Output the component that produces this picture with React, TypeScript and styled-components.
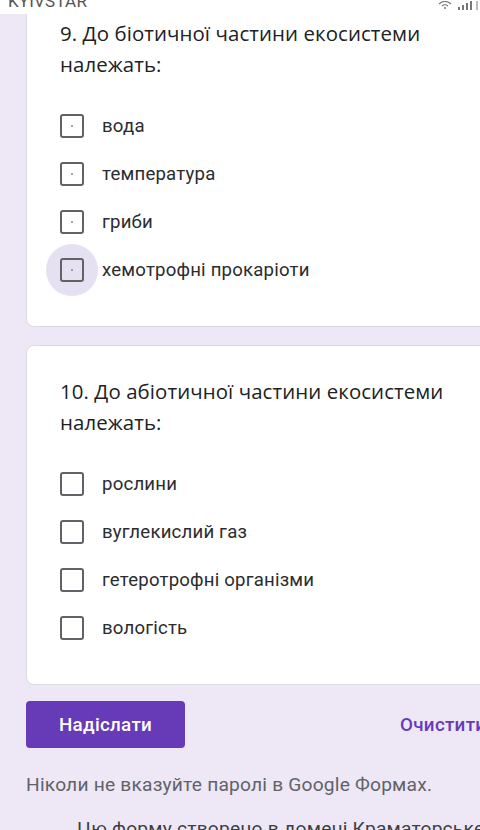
import React from "react";
import styled, { createGlobalStyle } from "styled-components";

const Global = createGlobalStyle`
  html, body { margin: 0; padding: 0; }
  body { background: #ede7f6; width: 480px; height: 830px; overflow: hidden; }
  #root { width: 480px; height: 830px; overflow: hidden; }
`;

const Page = styled.div`
  width: 480px;
  height: 830px;
  overflow: hidden;
  background: #ede7f6;
  display: flex;
  flex-direction: column;
`;

const StatusBar = styled.div`
  height: 14px;
  flex: none;
  background: #ffffff;
  display: flex;
  align-items: flex-end;
  justify-content: space-between;
  padding: 0 0 0 8px;
  overflow: hidden;
`;

const Carrier = styled.span`
  font-family: Roboto, "Liberation Sans", sans-serif;
  font-size: 17px;
  line-height: 24px;
  color: #555;
  letter-spacing: 0.2px;
  margin-bottom: 1px;
`;

const StatusIcons = styled.div`
  display: flex;
  align-items: flex-start;
  gap: 6px;
  align-self: flex-start;
  padding-top: 1px;
`;

const Main = styled.div`
  display: flex;
  flex-direction: column;
  padding-left: 26px;
`;

const Card = styled.section<{ $clipped?: boolean }>`
  width: 480px;
  background: #ffffff;
  border: 1px solid #dadce0;
  border-radius: ${(p) => (p.$clipped ? "0 0 8px 8px" : "8px")};
  border-top-width: ${(p) => (p.$clipped ? "0" : "1px")};
  padding: ${(p) => (p.$clipped ? "4px" : "30px")} 24px 32px 33px;
  margin-bottom: ${(p) => (p.$clipped ? "18px" : "16px")};
  box-sizing: border-box;
`;

const Title = styled.div`
  font-family: "Open Sans", Lato, sans-serif;
  font-size: 20.4px;
  line-height: 31px;
  color: #202124;
  letter-spacing: 0.1px;
  margin-bottom: 22px;
`;

const Options = styled.div`
  display: flex;
  flex-direction: column;
`;

const Row = styled.label`
  height: 48px;
  display: flex;
  align-items: center;
  gap: 18px;
`;

const BoxWrap = styled.span<{ $hover?: boolean }>`
  position: relative;
  width: 24px;
  height: 24px;
  flex: none;
  display: flex;
  align-items: center;
  justify-content: center;
  &::before {
    content: "";
    display: ${(p) => (p.$hover ? "block" : "none")};
    position: absolute;
    left: -14px;
    top: -14px;
    width: 52px;
    height: 52px;
    border-radius: 50%;
    background: #e6e0f3;
  }
`;

const Box = styled.span<{ $dot?: boolean }>`
  position: relative;
  width: 24px;
  height: 24px;
  box-sizing: border-box;
  border: 2.5px solid #5f6368;
  border-radius: 3px;
  background: transparent;
  display: flex;
  align-items: center;
  justify-content: center;
  &::after {
    content: "";
    display: ${(p) => (p.$dot ? "block" : "none")};
    width: 2px;
    height: 2px;
    border-radius: 50%;
    background: #8a8a8a;
  }
`;

const Label = styled.span`
  font-family: Roboto, "Liberation Sans", sans-serif;
  font-size: 18.6px;
  color: #2b2c2f;
  letter-spacing: 0.2px;
`;

const Actions = styled.div`
  display: flex;
  align-items: center;
  gap: 215px;
  height: 47px;
  margin-bottom: 22px;
`;

const Submit = styled.button`
  width: 159px;
  height: 47px;
  flex: none;
  border: none;
  border-radius: 4px;
  background: #673ab7;
  color: #ffffff;
  font-family: Roboto, "Liberation Sans", sans-serif;
  font-weight: 500;
  font-size: 18.8px;
  letter-spacing: 0.3px;
  padding: 0;
`;

const Clear = styled.span`
  font-family: Roboto, "Liberation Sans", sans-serif;
  font-weight: 500;
  font-size: 18.8px;
  color: #673ab7;
  letter-spacing: 0.3px;
  white-space: nowrap;
`;

const Note = styled.div`
  font-family: Roboto, "Liberation Sans", sans-serif;
  font-size: 19.2px;
  line-height: 30px;
  color: #5f6368;
  letter-spacing: 0.2px;
  white-space: nowrap;
`;

const Domain = styled(Note)`
  padding-left: 51px;
  margin-top: 14px;
  color: #3c4043;
`;

type Opt = { text: string; hover?: boolean };

function Question({ title, options, dot, clipped }: { title: string; options: Opt[]; dot?: boolean; clipped?: boolean }) {
  return (
    <Card $clipped={clipped}>
      <Title>{title}</Title>
      <Options>
        {options.map((o) => (
          <Row key={o.text}>
            <BoxWrap $hover={o.hover}>
              <Box $dot={dot} />
            </BoxWrap>
            <Label>{o.text}</Label>
          </Row>
        ))}
      </Options>
    </Card>
  );
}

export default function App() {
  return (
    <Page>
      <Global />
      <StatusBar>
        <Carrier>KYIVSTAR</Carrier>
        <StatusIcons>
          <svg width="14" height="8" viewBox="0 0 14 8">
            <path d="M1 3 Q7 -2 13 3" stroke="#777" strokeWidth="1.2" fill="none" />
            <path d="M4 5 Q7 2.5 10 5" stroke="#777" strokeWidth="1.2" fill="none" />
            <circle cx="7" cy="7" r="1" fill="#777" />
          </svg>
          <svg width="22" height="9" viewBox="0 0 22 9">
            <rect x="0" y="6" width="2" height="3" fill="#777" />
            <rect x="4" y="4" width="2" height="5" fill="#777" />
            <rect x="8" y="2" width="2" height="7" fill="#777" />
            <rect x="12" y="0" width="2" height="9" fill="#777" />
            <rect x="18" y="0" width="2" height="9" fill="#bbb" />
          </svg>
        </StatusIcons>
      </StatusBar>
      <Main>
        <Question
          clipped
          dot
          title="9. До біотичної частини екосистеми належать:"
          options={[
            { text: "вода" },
            { text: "температура" },
            { text: "гриби" },
            { text: "хемотрофні прокаріоти", hover: true },
          ]}
        />
        <Question
          title="10. До абіотичної частини екосистеми належать:"
          options={[
            { text: "рослини" },
            { text: "вуглекислий газ" },
            { text: "гетеротрофні організми" },
            { text: "вологість" },
          ]}
        />
        <Actions>
          <Submit>Надіслати</Submit>
          <Clear>Очистити форму</Clear>
        </Actions>
        <Note>Ніколи не вказуйте паролі в Google Формах.</Note>
        <Domain>Цю форму створено в домені Краматорське вище професійне училище</Domain>
      </Main>
    </Page>
  );
}
